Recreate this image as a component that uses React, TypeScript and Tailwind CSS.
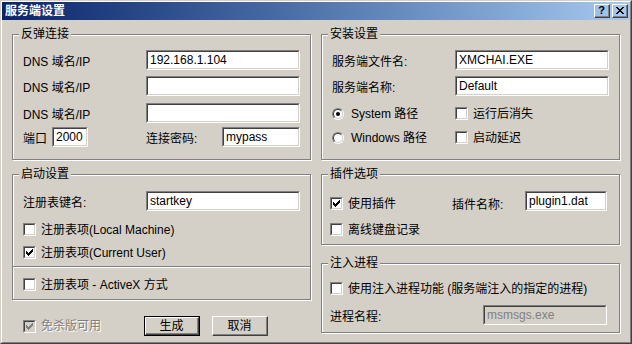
import React from "react";

const FONT = "font-[family-name:'Liberation_Sans','Noto_Sans_CJK_SC',sans-serif]";

function Sunken({ className = "", children, disabled = false }: { className?: string; children?: React.ReactNode; disabled?: boolean }) {
  return (
    <div className={`border-t border-l border-b border-r border-t-[#808080] border-l-[#808080] border-b-white border-r-white ${className}`}>
      <div
        className={`h-full w-full border-t border-l border-b border-r border-t-[#404040] border-l-[#404040] border-b-[#d4d0c8] border-r-[#d4d0c8] ${
          disabled ? "bg-[#d4d0c8]" : "bg-white"
        }`}
      >
        {children}
      </div>
    </div>
  );
}

function Edit({ w, value = "", disabled = false }: { w: string; value?: string; disabled?: boolean }) {
  return (
    <Sunken className={`${w} h-[20px] shrink-0`} disabled={disabled}>
      <div className={`pl-[2px] text-[12px] leading-[16px] whitespace-nowrap ${disabled ? "text-[#808080]" : "text-black"}`}>{value}</div>
    </Sunken>
  );
}

const CHECK_PIX: [number, number][] = [
  [6, 0], [5, 1], [6, 1], [0, 2], [4, 2], [5, 2], [6, 2], [0, 3], [1, 3], [3, 3], [4, 3], [5, 3],
  [0, 4], [1, 4], [2, 4], [3, 4], [4, 4], [1, 5], [2, 5], [3, 5], [2, 6],
];

function Check({ checked = false, disabled = false }: { checked?: boolean; disabled?: boolean }) {
  return (
    <Sunken className="w-[13px] h-[13px] shrink-0" disabled={disabled}>
      {checked && (
        <svg width="9" height="9" viewBox="0 0 9 9" shapeRendering="crispEdges" className="block">
          {CHECK_PIX.map(([x, y]) => (
            <rect key={`${x}-${y}`} x={x + 1} y={y + 1} width="1" height="1" fill={disabled ? "#808080" : "#000"} />
          ))}
        </svg>
      )}
    </Sunken>
  );
}

function CheckRow({ label, checked = false, className = "" }: { label: string; checked?: boolean; className?: string }) {
  return (
    <div className={`flex items-center gap-[5px] h-[13px] ${className}`}>
      <Check checked={checked} />
      <span className="whitespace-nowrap">{label}</span>
    </div>
  );
}

function Radio({ checked = false }: { checked?: boolean }) {
  return (
    <div className="w-[12px] h-[12px] shrink-0 rounded-full border border-t-[#808080] border-l-[#808080] border-b-white border-r-white">
      <div className="w-full h-full rounded-full border border-t-[#404040] border-l-[#404040] border-b-[#d4d0c8] border-r-[#d4d0c8] bg-white flex items-center justify-center">
        {checked && <div className="w-[4px] h-[4px] rounded-full bg-black" />}
      </div>
    </div>
  );
}

function Raised({ className = "", children }: { className?: string; children?: React.ReactNode }) {
  return (
    <div className={`border-t border-l border-b border-r border-t-white border-l-white border-b-[#404040] border-r-[#404040] ${className}`}>
      <div className="h-full w-full border-b border-r border-b-[#808080] border-r-[#808080] flex items-center justify-center">{children}</div>
    </div>
  );
}

function Btn({ label, isDefault = false }: { label: string; isDefault?: boolean }) {
  if (isDefault) {
    return (
      <div className="w-[56px] h-[20px] border border-black shrink-0">
        <Raised className="h-full w-full">
          <span className="text-[12px] leading-[14px]">{label}</span>
        </Raised>
      </div>
    );
  }
  return (
    <Raised className="w-[56px] h-[20px] shrink-0">
      <span className="text-[12px] leading-[14px]">{label}</span>
    </Raised>
  );
}

function Group({ title, className = "", children }: { title: string; className?: string; children?: React.ReactNode }) {
  return (
    <div className={`relative w-[299px] border border-[#808080] shadow-[1px_1px_0_#fff,inset_1px_1px_0_#fff] ${className}`}>
      <span className="absolute -top-[8px] left-[6px] bg-[#d4d0c8] px-[2px] leading-[14px] whitespace-nowrap">{title}</span>
      {children}
    </div>
  );
}

function LabelEdit({ label, value, className = "" }: { label: string; value: string; className?: string }) {
  return (
    <div className={`flex items-center h-[20px] ${className}`}>
      <span className="w-[123px] mt-[3px] whitespace-nowrap">{label}</span>
      <Edit w="w-[154px]" value={value} />
    </div>
  );
}

const X_PIX: [number, number][] = [
  [0, 0], [1, 0], [6, 0], [7, 0],
  [1, 1], [2, 1], [5, 1], [6, 1],
  [2, 2], [3, 2], [4, 2], [5, 2],
  [3, 3], [4, 3],
  [2, 4], [3, 4], [4, 4], [5, 4],
  [1, 5], [2, 5], [5, 5], [6, 5],
  [0, 6], [1, 6], [6, 6], [7, 6],
];

export default function App() {
  return (
    <div
      className={`w-[632px] h-[344px] bg-[#d4d0c8] text-black text-[12px] leading-[14px] ${FONT} border-t border-l border-b border-r border-t-[#d4d0c8] border-l-[#d4d0c8] border-b-[#404040] border-r-[#404040]`}
    >
      <div className="h-full w-full border-t border-l border-b border-r border-t-white border-l-white border-b-[#808080] border-r-[#808080] flex flex-col">
        {/* Title bar */}
        <div className="h-[18px] shrink-0 bg-linear-to-r from-[#0a246a] to-[#a6caf0] flex items-center pl-[3px] pr-[2px]">
          <span className="text-white font-bold text-[12px] leading-[14px]">服务端设置</span>
          <div className="ml-auto flex gap-[2px]">
            <Raised className="w-[16px] h-[14px]">
              <span className="text-[11px] leading-[11px] font-bold text-black">?</span>
            </Raised>
            <Raised className="w-[16px] h-[14px]">
              <svg width="8" height="7" viewBox="0 0 8 7" shapeRendering="crispEdges" className="block">
                {X_PIX.map(([x, y]) => (
                  <rect key={`${x}-${y}`} x={x} y={y} width="1" height="1" fill="#000" />
                ))}
              </svg>
            </Raised>
          </div>
        </div>

        {/* Body */}
        <div className="flex gap-[10px] pl-[10px] pt-[14px]">
          {/* Left column */}
          <div className="w-[299px] flex flex-col">
            <Group title="反弹连接" className="h-[126px]">
              <div className="pl-[10px] pt-[15px] flex flex-col">
                <LabelEdit label="DNS 域名/IP" value="192.168.1.104" />
                <LabelEdit label="DNS 域名/IP" value="" className="mt-[6px]" />
                <LabelEdit label="DNS 域名/IP" value="" className="mt-[7px]" />
                <div className="flex items-center h-[20px] mt-[4px]">
                  <span className="w-[29px] mt-[3px]">端口</span>
                  <Edit w="w-[36px]" value="2000" />
                  <span className="ml-[58px] w-[76px] mt-[3px] whitespace-nowrap">连接密码:</span>
                  <Edit w="w-[78px]" value="mypass" />
                </div>
              </div>
            </Group>

            <Group title="启动设置" className="h-[126px] mt-[14px]">
              <div className="pl-[10px] pt-[16px] flex flex-col">
                <LabelEdit label="注册表键名:" value="startkey" />
                <CheckRow className="mt-[12px]" label="注册表项(Local Machine)" />
                <CheckRow className="mt-[10px]" checked label="注册表项(Current User)" />
              </div>
              <div className="mt-[7px] h-[2px] border-t border-t-[#808080] border-b border-b-white" />
              <div className="pl-[10px] mt-[10px]">
                <CheckRow label="注册表项 - ActiveX 方式" />
              </div>
            </Group>

            <div className="mt-[16px] pl-[11px] flex items-center h-[20px]">
              <div className="w-[121px] flex items-center gap-[5px]">
                <Check checked disabled />
                <span className="text-[#808080] [text-shadow:1px_1px_0_#fff] whitespace-nowrap">免杀版可用</span>
              </div>
              <Btn label="生成" isDefault />
              <div className="ml-[12px]">
                <Btn label="取消" />
              </div>
            </div>
          </div>

          {/* Right column */}
          <div className="w-[299px] flex flex-col">
            <Group title="安装设置" className="h-[126px]">
              <div className="pl-[10px] pt-[15px] flex flex-col">
                <LabelEdit label="服务端文件名:" value="XMCHAI.EXE" />
                <LabelEdit label="服务端名称:" value="Default" className="mt-[6px]" />
                <div className="mt-[11px] flex items-center h-[13px]">
                  <div className="w-[123px] flex items-center gap-[7px]">
                    <Radio checked />
                    <span className="whitespace-nowrap">System 路径</span>
                  </div>
                  <CheckRow label="运行后消失" />
                </div>
                <div className="mt-[11px] flex items-center h-[13px]">
                  <div className="w-[123px] flex items-center gap-[7px]">
                    <Radio />
                    <span className="whitespace-nowrap">Windows 路径</span>
                  </div>
                  <CheckRow label="启动延迟" />
                </div>
              </div>
            </Group>

            <Group title="插件选项" className="h-[71px] mt-[14px]">
              <div className="pl-[8px] pt-[16px] flex flex-col">
                <div className="flex items-start h-[20px]">
                  <div className="w-[122px] mt-[6px] flex items-center gap-[5px] h-[13px]">
                    <Check checked />
                    <span className="whitespace-nowrap">使用插件</span>
                  </div>
                  <span className="w-[73px] mt-[7px] whitespace-nowrap">插件名称:</span>
                  <Edit w="w-[82px]" value="plugin1.dat" />
                </div>
                <CheckRow className="mt-[12px]" label="离线键盘记录" />
              </div>
            </Group>

            <Group title="注入进程" className="h-[70px] mt-[18px]">
              <div className="pl-[8px] pt-[18px] flex flex-col">
                <CheckRow label="使用注入进程功能 (服务端注入的指定的进程)" />
                <div className="mt-[10px] flex items-center h-[20px]">
                  <span className="w-[153px] mt-[3px] whitespace-nowrap">进程名程:</span>
                  <Edit w="w-[124px]" value="msmsgs.exe" disabled />
                </div>
              </div>
            </Group>
          </div>
        </div>
      </div>
    </div>
  );
}
